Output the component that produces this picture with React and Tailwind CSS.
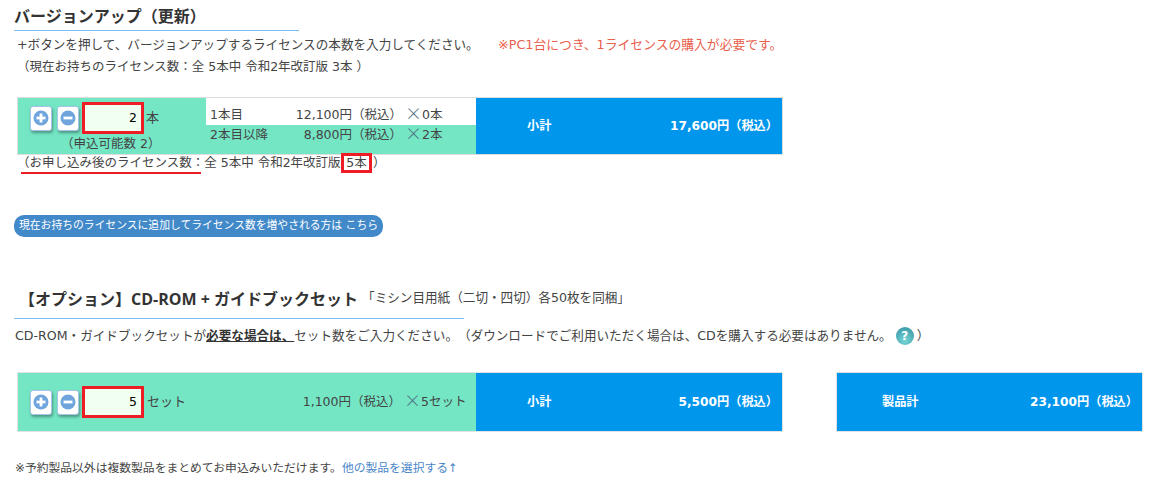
import React from "react";

const font = { fontFamily: '"DejaVu Sans", "Noto Sans CJK JP", sans-serif' };
const headFont = { fontFamily: '"Open Sans", "Noto Sans CJK JP", sans-serif' };
const cjkFont = { fontFamily: '"Noto Sans CJK JP", sans-serif' };

const StepButton = ({ type }) => (
  <button className="w-[22px] h-[25px] bg-white rounded-[3px] border border-[#a9c4ea] shadow-[1px_2px_3px_rgba(0,0,0,0.35)] flex items-center justify-center shrink-0">
    <svg width="16" height="16" viewBox="0 0 16 16">
      <circle cx="8" cy="8" r="7.5" fill="#6fa5dc" />
      <rect x="3.5" y="6.6" width="9" height="2.8" fill="#fff" />
      {type === "plus" && <rect x="6.6" y="3.5" width="2.8" height="9" fill="#fff" />}
    </svg>
  </button>
);

const Controls = ({ value }) => (
  <div className="flex items-center shrink-0">
    <StepButton type="plus" />
    <div className="w-[5px]" />
    <StepButton type="minus" />
    <div className="w-[3px]" />
    <div className="w-[62px] h-[32px] border-[3px] border-[#ee1c25] bg-[#f0fff0] flex items-center justify-end pr-[4px] text-[12.5px] text-black shrink-0">
      {value}
    </div>
  </div>
);

const Times = () => (
  <span className="text-[17px] font-light leading-[0] text-[#4a6a80] align-[-1px]" style={cjkFont}>×</span>
);

const BlueBox = ({ label, price, labelClass }) => (
  <div className="h-full bg-[#0096ec] flex items-center justify-between text-white font-bold text-[12.2px] pr-[4px]">
    <span className={labelClass}>{label}</span>
    <span>{price}（税込）</span>
  </div>
);

export default function App() {
  return (
    <div
      className="w-[1149px] h-[487px] overflow-hidden bg-white text-[#444] text-[12.5px] pl-[14px] [text-spacing-trim:space-all]"
      style={font}
    >
      {/* バージョンアップ */}
      <h2 className="text-[16px] font-bold leading-[22px] pt-[4px] text-[#333] w-[285px] h-[31px] border-b border-[#7dbcf0]" style={cjkFont}>
        バージョンアップ（更新）
      </h2>
      <div className="flex pl-[3px] mt-[5px] leading-[18px] whitespace-nowrap">
        <span className="w-[481px] text-[12.6px]">+ボタンを押して、バージョンアップするライセンスの本数を入力してください。</span>
        <span className="text-[#e8604c] text-[12.8px]">※PC1台につき、1ライセンスの購入が必要です。</span>
      </div>
      <p className="pl-[3px] mt-[4px] leading-[18px] whitespace-nowrap">（現在お持ちのライセンス数：全 5本中 令和2年改訂版 3本 ）</p>

      <div className="ml-[3px] mt-[21px] w-[766px] h-[58px] border border-[#ddd] flex">
        <div className="w-[188px] bg-[#74e6c4] flex flex-col pl-[12px] pt-[4px]">
          <div className="flex items-center">
            <Controls value="2" />
            <span className="ml-[2px] text-[13px]">本</span>
          </div>
          <div className="pl-[31px] leading-[16px] mt-[2px] whitespace-nowrap">（申込可能数 2）</div>
        </div>
        <div className="w-[270px] flex flex-col whitespace-nowrap">
          <div className="h-[27px] bg-white flex items-end pl-[4px] pb-[1px] leading-[18px]">
            <div className="w-[192px] flex justify-between">
              <span>1本目</span>
              <span>12,100円（税込）</span>
            </div>
            <span className="ml-[3px]"><Times />0本</span>
          </div>
          <div className="flex-1 bg-[#74e6c4] flex items-start pl-[4px] pt-[1px] leading-[18px]">
            <div className="w-[192px] flex justify-between">
              <span>2本目以降</span>
              <span>8,800円（税込）</span>
            </div>
            <span className="ml-[3px]"><Times />2本</span>
          </div>
        </div>
        <div className="flex-1">
          <BlueBox label="小計" price="17,600円" labelClass="pl-[51px]" />
        </div>
      </div>

      <div className="relative pl-[3px] leading-[18px] h-[18px] whitespace-nowrap">
        <span className="relative top-[-1px]">（お申し込み後のライセンス数：全 5本中 令和2年改訂版</span>
        <span className="absolute left-[327px] top-[-2px] w-[31px] h-[20px] border-[3px] border-[#ee1c25] flex items-center justify-center">5本</span>
        <span className="absolute left-[359px] top-[-1px]">）</span>
        <div className="absolute left-[7px] top-[17px] w-[180px] h-[2px] bg-[#ee1c25]" />
      </div>

      <div className="mt-[42px] w-[369px] h-[22px] rounded-[10px] bg-[#4289c9] text-white text-[10.8px] flex items-center pl-[5px] whitespace-nowrap">
        現在お持ちのライセンスに追加してライセンス数を増やされる方は こちら
      </div>

      {/* オプション */}
      <div className="mt-[46px] w-[450px] h-[36px] pb-[4px] border-b border-[#7dbcf0] flex items-center pl-[5px] whitespace-nowrap">
        <span className="text-[16px] font-bold text-[#333]" style={headFont}>【オプション】CD-ROM + ガイドブックセット</span>
        <span className="ml-[4px] text-[12.6px]">「ミシン目用紙（二切・四切）各50枚を同梱」</span>
      </div>
      <div className="flex items-center mt-[4px] h-[26px] pl-[1px] whitespace-nowrap text-[12.6px]">
        CD-ROM・ガイドブックセットが
        <span className="font-bold underline text-[#333]">必要な場合は、</span>
        セット数をご入力ください。（ダウンロードでご利用いただく場合は、CDを購入する必要はありません。
        <span className="ml-[4px] w-[18px] h-[18px] rounded-full bg-[radial-gradient(circle_at_50%_75%,#76d6d6,#2f8f9f)] text-white text-[12px] font-bold flex items-center justify-center">?</span>
        <span className="ml-[3px]">）</span>
      </div>

      <div className="flex mt-[23px] h-[60px]">
        <div className="ml-[3px] w-[766px] border border-[#e2e2e2] flex">
          <div className="w-[458px] bg-[#74e6c4] flex items-center pl-[12px] whitespace-nowrap">
            <Controls value="5" />
            <span className="ml-[3px] text-[13px] w-[152px]">セット</span>
            <span className="w-[102px] text-right">1,100円（税込）</span>
            <span className="ml-[3px]"><Times />5セット</span>
          </div>
          <div className="flex-1">
            <BlueBox label="小計" price="5,500円" labelClass="pl-[51px]" />
          </div>
        </div>
        <div className="ml-[53px] w-[307px] border border-[#e2e2e2]">
          <BlueBox label="製品計" price="23,100円" labelClass="pl-[45px]" />
        </div>
      </div>

      <p className="mt-[27px] leading-[18px] pl-[1px] text-[11.8px] whitespace-nowrap">
        ※予約製品以外は複数製品をまとめてお申込みいただけます。
        <span className="text-[#4a86c8]">他の製品を選択する↑</span>
      </p>
    </div>
  );
}
